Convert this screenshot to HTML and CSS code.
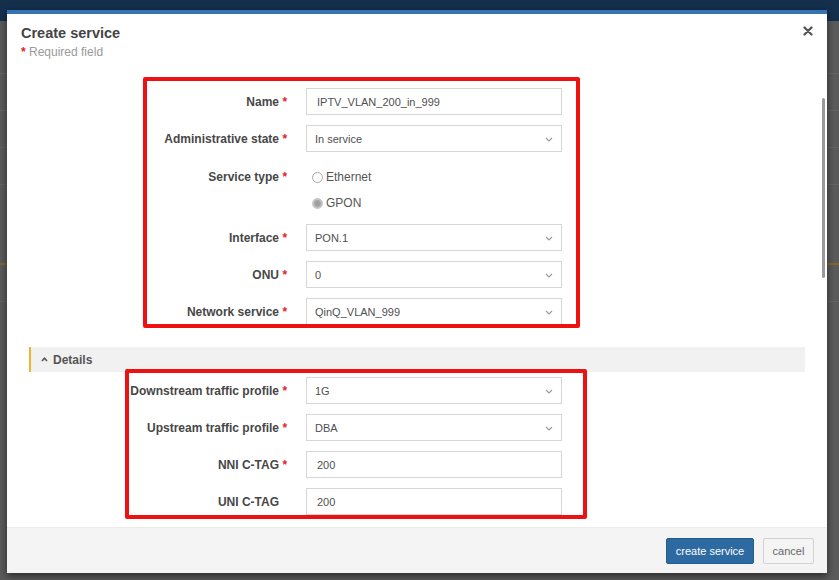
FILE: index.html
```html
<!DOCTYPE html>
<html lang="en">
<head>
<meta charset="utf-8">
<title>Create service</title>
<link rel="stylesheet" href="styles.css">
</head>
<body>
<div class="page">
  <div class="topbar"></div>
  <div class="bg-rows">
    <div class="bg-row"></div>
    <div class="bg-row"></div>
    <div class="bg-row"></div>
    <div class="bg-row"></div>
    <div class="bg-row bg-accent"></div>
    <div class="bg-row"></div>
  </div>
</div>

<div class="modal">
  <div class="modal-header">
    <h1 class="title">Create service</h1>
    <div class="req-note"><span class="star">*</span> Required field</div>
    <button class="close" aria-label="close">
      <svg width="10" height="10" viewBox="0 0 10 10"><path d="M1.5 1.5 L8.5 8.5 M8.5 1.5 L1.5 8.5" stroke="#555" stroke-width="2.3" stroke-linecap="round"/></svg>
    </button>
  </div>

  <div class="modal-body">
    <div class="form form-main">
      <div class="row">
        <div class="lbl">Name</div><div class="req">*</div>
        <div class="ctl input">IPTV_VLAN_200_in_999</div>
      </div>
      <div class="row">
        <div class="lbl">Administrative state</div><div class="req">*</div>
        <div class="ctl select">In service<svg class="chev" width="8" height="5" viewBox="0 0 8 5"><path d="M1 1 L4 4 L7 1" fill="none" stroke="#999" stroke-width="1.1"/></svg></div>
      </div>
      <div class="row row-radio">
        <div class="lbl">Service type</div><div class="req">*</div>
        <div class="radios">
          <div class="radio-line"><span class="radio"></span>Ethernet</div>
          <div class="radio-line"><span class="radio radio-on"></span>GPON</div>
        </div>
      </div>
      <div class="row">
        <div class="lbl">Interface</div><div class="req">*</div>
        <div class="ctl select">PON.1<svg class="chev" width="8" height="5" viewBox="0 0 8 5"><path d="M1 1 L4 4 L7 1" fill="none" stroke="#999" stroke-width="1.1"/></svg></div>
      </div>
      <div class="row">
        <div class="lbl">ONU</div><div class="req">*</div>
        <div class="ctl select">0<svg class="chev" width="8" height="5" viewBox="0 0 8 5"><path d="M1 1 L4 4 L7 1" fill="none" stroke="#999" stroke-width="1.1"/></svg></div>
      </div>
      <div class="row row-last">
        <div class="lbl">Network service</div><div class="req">*</div>
        <div class="ctl select">QinQ_VLAN_999<svg class="chev" width="8" height="5" viewBox="0 0 8 5"><path d="M1 1 L4 4 L7 1" fill="none" stroke="#999" stroke-width="1.1"/></svg></div>
      </div>
    </div>

    <div class="details-bar">
      <svg class="caret" width="7" height="5" viewBox="0 0 7 5"><path d="M1 4 L3.5 1.3 L6 4" fill="none" stroke="#555" stroke-width="1.6"/></svg>
      <span>Details</span>
    </div>

    <div class="form form-details">
      <div class="row">
        <div class="lbl">Downstream traffic profile</div><div class="req">*</div>
        <div class="ctl select">1G<svg class="chev" width="8" height="5" viewBox="0 0 8 5"><path d="M1 1 L4 4 L7 1" fill="none" stroke="#999" stroke-width="1.1"/></svg></div>
      </div>
      <div class="row">
        <div class="lbl">Upstream traffic profile</div><div class="req">*</div>
        <div class="ctl select">DBA<svg class="chev" width="8" height="5" viewBox="0 0 8 5"><path d="M1 1 L4 4 L7 1" fill="none" stroke="#999" stroke-width="1.1"/></svg></div>
      </div>
      <div class="row">
        <div class="lbl">NNI C-TAG</div><div class="req">*</div>
        <div class="ctl input">200</div>
      </div>
      <div class="row">
        <div class="lbl">UNI C-TAG</div><div class="req"></div>
        <div class="ctl input">200</div>
      </div>
    </div>

    <div class="scroll-thumb"></div>
  </div>

  <div class="modal-footer">
    <button class="btn btn-primary">create service</button>
    <button class="btn btn-default">cancel</button>
  </div>
</div>

<div class="annot annot-1"></div>
<div class="annot annot-2"></div>
</body>
</html>
```

FILE: styles.css
```css
* { box-sizing: border-box; }

html, body {
  margin: 0;
  padding: 0;
}

body {
  width: 839px;
  height: 580px;
  overflow: hidden;
  background: #5b5b5b;
  font-family: "Liberation Sans", Arial, sans-serif;
  position: relative;
}

.page {
  height: 100%;
}

.topbar {
  height: 21px;
  background: #14304d;
}

.bg-rows {
  padding-top: 16px;
}

.bg-row {
  height: 37px;
  border-bottom: 1px solid #656565;
}

.bg-accent {
  height: 80px;
  border-bottom: 2px solid #85682c;
}

.modal {
  position: absolute;
  left: 7px;
  top: 10px;
  width: 820px;
  height: 563px;
  background: #fff;
  border-top: 4px solid #3673b2;
  display: flex;
  flex-direction: column;
  box-shadow: 0 3px 8px rgba(0, 0, 0, 0.55);
}

.modal-header {
  position: relative;
  padding: 11px 14px 0 14px;
  height: 45px;
}

.title {
  margin: 0;
  font-size: 14.5px;
  line-height: 17px;
  font-weight: bold;
  color: #444;
}

.req-note {
  margin-top: 3px;
  font-size: 12px;
  line-height: 14px;
  color: #9a9a9a;
}

.star {
  color: #e02424;
  font-weight: bold;
}

.close {
  position: absolute;
  right: 14px;
  top: 12px;
  width: 10px;
  height: 10px;
  padding: 0;
  border: 0;
  background: none;
  display: flex;
}

.modal-body {
  flex: 1;
  position: relative;
  overflow: hidden;
  display: flex;
  flex-direction: column;
}

.form-main {
  padding-top: 29px;
}

.form-details {
  padding-top: 5px;
}

.row {
  display: flex;
  align-items: center;
  height: 27px;
  margin-bottom: 10px;
}

.row-last {
  margin-bottom: 0;
}

.row-radio {
  align-items: flex-start;
  height: 54px;
  padding-top: 2px;
  margin-bottom: 8px;
}

.lbl {
  width: 272px;
  text-align: right;
  font-size: 12px;
  font-weight: bold;
  color: #474747;
  white-space: nowrap;
}

.row-radio .lbl,
.row-radio .req {
  line-height: 26px;
}

.req {
  width: 27px;
  padding-left: 3.5px;
  font-size: 12px;
  font-weight: bold;
  color: #e02424;
}

.ctl {
  width: 256px;
  height: 27px;
  border: 1px solid #d6d6d6;
  background: #fff;
  font-size: 11px;
  color: #505050;
  display: flex;
  align-items: center;
  position: relative;
}

.input {
  padding-left: 10px;
}

.select {
  padding-left: 8px;
}

.chev {
  position: absolute;
  right: 8px;
  top: 11px;
}

.radios {
  display: flex;
  flex-direction: column;
}

.radio-line {
  height: 26px;
  display: flex;
  align-items: center;
  font-size: 12px;
  color: #555;
}

.radio {
  width: 11px;
  height: 11px;
  margin-left: 6px;
  margin-right: 3px;
  border-radius: 50%;
  border: 1px solid #a9a9a9;
  background: #fff;
}

.radio-on {
  border-color: #c4c4c4;
  background: radial-gradient(circle, #9a9a9a 0, #a6a6a6 45%, #c9c9c9 70%);
}

.details-bar {
  margin: 22px 22px 0 22px;
  height: 25px;
  background: #f1f1f1;
  border-left: 2px solid #f0b331;
  display: flex;
  align-items: center;
  padding-left: 10px;
  gap: 5px;
  font-size: 12px;
  font-weight: bold;
  color: #555;
}

.caret {
  display: block;
}

.scroll-thumb {
  position: absolute;
  left: 815px;
  top: 39px;
  width: 3px;
  height: 180px;
  border-radius: 2px;
  background: #9a9a9a;
}

.modal-footer {
  height: 46px;
  background: #f4f4f4;
  border-top: 1px solid #ebebeb;
  display: flex;
  justify-content: flex-end;
  align-items: center;
  gap: 9px;
  padding-right: 13px;
  padding-top: 1px;
}

.btn {
  height: 26px;
  font-family: "Liberation Sans", Arial, sans-serif;
  font-size: 11px;
  border-radius: 2px;
  padding: 0;
  cursor: pointer;
}

.btn-primary {
  width: 88px;
  background: #2c6aa1;
  border: 1px solid #245c8e;
  color: #fff;
}

.btn-default {
  width: 51px;
  background: #f4f4f4;
  border: 1px solid #d2d2d2;
  color: #666;
}

.annot {
  position: absolute;
  border: 4px solid #ee1111;
  border-radius: 2px;
  pointer-events: none;
}

.annot-1 {
  left: 143px;
  top: 77px;
  width: 437px;
  height: 251px;
}

.annot-2 {
  left: 125px;
  top: 369px;
  width: 462px;
  height: 150px;
}
```
